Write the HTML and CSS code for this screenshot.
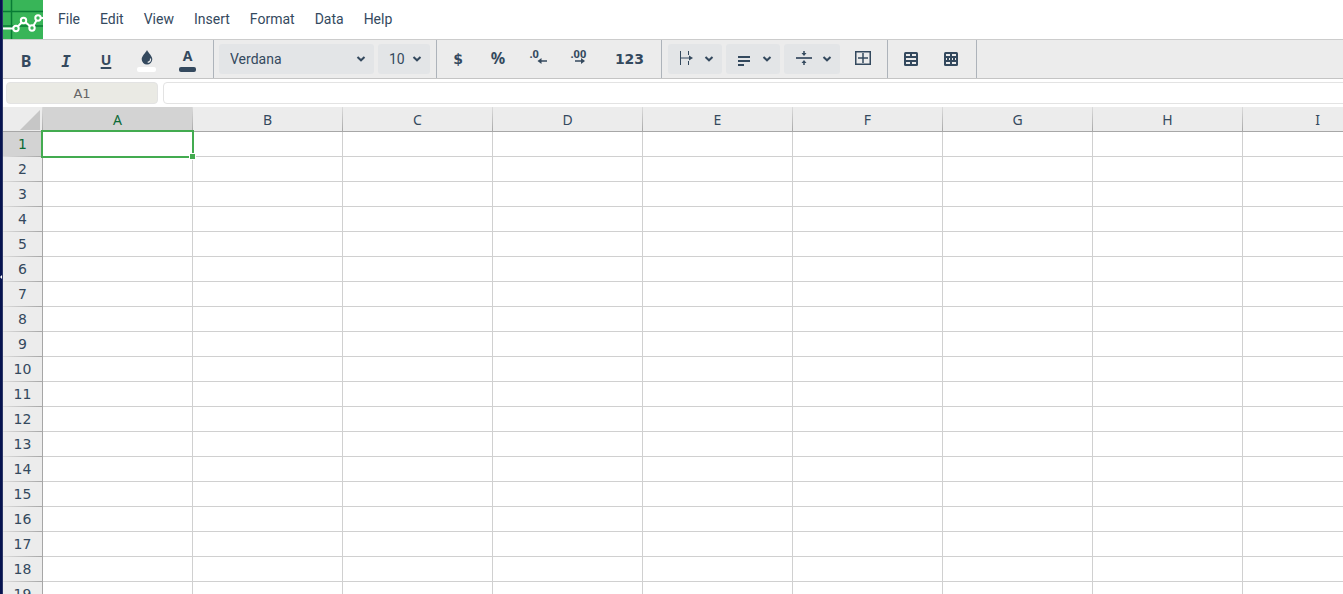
FILE: index.html
```html
<!DOCTYPE html>
<html lang="en">
<head>
  <meta charset="UTF-8">
  <title>Spreadsheet</title>
  <link rel="stylesheet" href="styles.css">
</head>
<body>

<div class="sidebar"><span class="sidebar-arrow"></span></div>

<div class="app">
  <header class="menubar">
    <svg class="logo" viewBox="0 0 40 39">
      <rect width="40" height="39" fill="#38b558"/>
      <path d="M8.5 0v39M0 11.5h40M0 26h40" stroke="#087b35" stroke-width="1.5"/>
      <path d="M0 28.5h13L20.500 20.500 29 28 35 18h5" fill="none" stroke="#fff" stroke-width="2"/>
      <g fill="#38b558" stroke="#fff" stroke-width="2">
        <circle cx="13" cy="28.500" r="2.700"/>
        <circle cx="20.500" cy="20.500" r="2.700"/>
        <circle cx="29" cy="28" r="2.700"/>
        <circle cx="35" cy="18" r="2.700"/>
      </g>
    </svg>
    <nav class="menu">
      <button>File</button>
      <button>Edit</button>
      <button>View</button>
      <button>Insert</button>
      <button>Format</button>
      <button>Data</button>
      <button>Help</button>
    </nav>
  </header>

  <div class="toolbar">
    <div class="group group-text">
      <button class="tool bold" aria-label="Bold">B</button>
      <button class="tool italic" aria-label="Italic">I</button>
      <button class="tool underline" aria-label="Underline">U</button>
      <button class="tool wide color-tool" aria-label="Fill color">
        <svg width="12" height="15" viewBox="0 0 12 15"><path d="M6 0C4.500 3 .7 6 .7 9.300a5.300 5.300 0 0 0 10.600 0C11.300 6 7.500 3 6 0z" fill="#34495e"/><path d="M9.500 8.500c.3 2-.9 3.500-2.800 3.900" fill="none" stroke="#ececec" stroke-width="1.200"/></svg>
        <span class="swatch swatch-fill"></span>
      </button>
      <button class="tool wide color-tool" aria-label="Text color">
        <span class="letter">A</span>
        <span class="swatch swatch-text"></span>
      </button>
    </div>

    <div class="group group-font">
      <div class="dropdown font-name">
        <select aria-label="Font"><option>Verdana</option><option>Arial</option></select>
        <svg class="chevron" viewBox="0 0 10 6"><path d="M1.500 1 5 4.300 8.500 1"/></svg>
      </div>
      <div class="dropdown font-size">
        <select aria-label="Font size"><option>10</option><option>12</option></select>
        <svg class="chevron" viewBox="0 0 10 6"><path d="M1.500 1 5 4.300 8.500 1"/></svg>
      </div>
    </div>

    <div class="group group-number">
      <button class="tool number" aria-label="Currency">$</button>
      <button class="tool percent" aria-label="Percent">%</button>
      <button class="tool wide decimal" aria-label="Decrease decimals">
        <span>.0</span>
        <svg width="18" height="6" viewBox="0 0 18 6"><path d="M9 3h8" stroke="#34495e" stroke-width="1.500"/><path d="M7.500 3l4-3v6z" fill="#34495e"/></svg>
      </button>
      <button class="tool wide decimal" aria-label="Increase decimals">
        <span>.00</span>
        <svg width="18" height="6" viewBox="0 0 18 6"><path d="M4 3h8" stroke="#34495e" stroke-width="1.500"/><path d="M14 3l-4-3v6z" fill="#34495e"/></svg>
      </button>
      <button class="tool number format">123</button>
    </div>

    <div class="group group-align">
      <button class="tool menu-tool" aria-label="Text wrap">
        <svg width="16" height="16" viewBox="0 0 16 16"><path d="M2.500 0v14M10.500 0v4M10.500 10v4M3 7h10" stroke="#34495e"/><path d="M11 4.500v5L15 7z" fill="#34495e"/></svg>
        <svg class="arrow" viewBox="0 0 10 6"><path d="M1.500 1 5 4.300 8.500 1"/></svg>
      </button>
      <button class="tool menu-tool" aria-label="Horizontal align">
        <svg width="16" height="16" viewBox="0 0 16 16"><path d="M2 6h12M2 10h12M2 14h6" stroke="#34495e" stroke-width="2"/></svg>
        <svg class="arrow" viewBox="0 0 10 6"><path d="M1.500 1 5 4.300 8.500 1"/></svg>
      </button>
      <button class="tool menu-tool valign" aria-label="Vertical align">
        <svg width="16" height="16" viewBox="0 0 16 16"><path d="M0 7h16" stroke="#34495e" stroke-width="1.700"/><path d="M8 0v3M8 11v3" stroke="#34495e" stroke-width="1.500"/><path d="M5.500 2h5L8 5zM5.500 12h5L8 9z" fill="#34495e"/></svg>
        <svg class="arrow" viewBox="0 0 10 6"><path d="M1.500 1 5 4.300 8.500 1"/></svg>
      </button>
      <button class="tool borders" aria-label="Borders">
        <svg width="16" height="16" viewBox="0 0 16 16"><path d="M.75 .75h14.500v12.500H.75z" fill="none" stroke="#34495e" stroke-width="1.500"/><path d="M8 2v10M3 7h10" stroke="#34495e" stroke-width="1.500"/></svg>
      </button>
    </div>

    <div class="group group-cells">
      <button class="tool" aria-label="Merge cells">
        <svg width="14" height="14" viewBox="0 0 14 14"><rect width="14" height="14" rx="1.500" fill="#34495e"/><path d="M2 2h4v2H2zM8 2h4v2H8zM2 6h10v2H2zM2 10h4v2H2zM8 10h4v2H8z" fill="#ececec"/></svg>
      </button>
      <button class="tool" aria-label="Unmerge cells">
        <svg width="14" height="14" viewBox="0 0 14 14"><rect width="14" height="14" rx="1.500" fill="#34495e"/><path d="M2 2h4v2H2zM8 2h4v2H8zM2 6h1v2H2zM5 6h1v2H5zM8 6h1v2H8zM11 6h1v2h-1zM2 10h4v2H2zM8 10h4v2H8z" fill="#ececec"/></svg>
      </button>
    </div>
  </div>

  <div class="formula-row">
    <input class="cell-name" type="text" value="A1" aria-label="Cell">
    <input class="formula" type="text" aria-label="Formula">
  </div>

  <table class="sheet">
    <thead>
      <tr id="columns"><th class="corner"><svg width="20" height="20" viewBox="0 0 20 20"><path d="M20 0v20H0z" fill="#c6c6c6"/></svg></th></tr>
    </thead>
    <tbody id="rows"></tbody>
  </table>
</div>

<script src="sheet.js"></script>
</body>
</html>
```

FILE: styles.css
```css
* { box-sizing: border-box; }

body {
  display: flex;
  height: 100vh;
  margin: 0;
  overflow: hidden;
  background: #fff;
  color: #34495e;
  font-family: Roboto, sans-serif;
  font-size: 14px;
}

button, select, input {
  margin: 0;
  padding: 0;
  border: 0;
  background: none;
  color: inherit;
  font: inherit;
}

svg { display: block; }

.sidebar {
  position: relative;
  flex: none;
  width: 3px;
  background: #06134f;
  border-right: 1px solid #2c3767;
}
.sidebar-arrow {
  position: absolute;
  top: 275px;
  left: 0;
  border: 2px solid transparent;
  border-right-color: #fff;
  border-left: 0;
}

.app { flex: 1; min-width: 0; overflow: hidden; }

/* menu */
.menubar { display: flex; height: 39px; }
.logo { width: 40px; height: 39px; }
.menu { display: flex; padding: 0 0 2px 5px; }
.menu button { padding: 0 10px; }

/* toolbar */
.toolbar {
  display: flex;
  height: 40px;
  background: #ececec;
  border-top: 1px solid #ccc;
  border-bottom: 1px solid #c4c4c4;
}
.group {
  display: flex;
  flex: none;
  align-items: center;
  border-right: 1px solid #adb3ba;
}
.group-text { padding: 0 5px 0 3px; }
.group-font { gap: 4px; padding: 0 6px 0 5px; }
.group-number { padding: 0 2px 0 1px; }
.group-align { gap: 4px; padding: 0 5px 0 6px; }
.group-cells { padding: 0 5px 0 3px; }

.tool {
  display: flex;
  align-items: center;
  justify-content: center;
  width: 40px;
  height: 30px;
}
.wide { width: 41px; }
.bold, .italic { padding-top: 4px; }
.bold { font: bold 16px "Noto Sans", sans-serif; }
.italic { font: italic bold 16px "DejaVu Sans Mono", monospace; }
.underline {
  font: bold 14px "Noto Sans", sans-serif;
  text-decoration: underline;
  text-decoration-thickness: 2px;
  text-underline-offset: 2px;
}
.color-tool { flex-direction: column; justify-content: flex-end; gap: 2px; padding-bottom: 2px; }
.letter { height: 16px; font: bold 14px/14px "Noto Sans", sans-serif; }
.swatch { height: 5px; border-radius: 2px; }
.swatch-fill { width: 19px; background: #fff; }
.swatch-text { width: 17px; background: #34495e; }

.dropdown { position: relative; height: 30px; }
.dropdown select {
  width: 100%;
  height: 100%;
  padding-left: 11px;
  border-radius: 3px;
  background: #e3e5e7;
  appearance: none;
}
.font-name { width: 155px; }
.font-size { width: 52px; }
.chevron, .arrow {
  width: 10px;
  height: 6px;
  fill: none;
  stroke: #34495e;
  stroke-width: 2;
}
.chevron { position: absolute; top: 12px; right: 8px; pointer-events: none; }

.number { font: bold 14px "DejaVu Sans", sans-serif; }
.percent { padding-bottom: 2px; font: bold 16px "Noto Sans", sans-serif; }
.format { width: 59px; }
.decimal { flex-direction: column; padding-bottom: 4px; }
.decimal span { width: 18px; height: 8px; font: bold 11px/8px "Noto Sans", sans-serif; text-align: left; }

.menu-tool { gap: 10px; width: 54px; padding-left: 2px; border-radius: 3px; background: #e3e5e7; }
.valign { width: 56px; padding-left: 4px; }
.borders { width: 38px; }

/* formula bar */
.formula-row { display: flex; gap: 5px; height: 28px; padding: 3px 0 3px 3px; }
.cell-name, .formula { border: 1px solid #e3e3e3; border-radius: 4px; }
.cell-name {
  width: 152px;
  background: #eaeae4;
  color: #666;
  font: 13px "DejaVu Sans", sans-serif;
  text-align: center;
}
.formula { flex: 1; margin-right: -8px; padding: 0 6px; }

/* sheet */
.sheet {
  table-layout: fixed;
  width: 1390px;
  border-collapse: separate;
  border-spacing: 0;
  font: 14px "DejaVu Sans", sans-serif;
}
.sheet th, .sheet td { height: 25px; padding: 0; }
.sheet th {
  background: #ececec;
  font-weight: normal;
  line-height: 23px;
}
.sheet td {
  position: relative;
  border-right: 1px solid #d0d0d0;
  border-bottom: 1px solid #d0d0d0;
}
.sheet thead th {
  width: 150px;
  font-family: "Noto Sans", sans-serif;
  border-right: 1px solid;
  border-bottom: 1px solid #a6a6a6;
  border-image: linear-gradient(#dedede, #a6a6a6) 1;
  border-image-width: 0 1px 1px 0;
}
.sheet thead .corner { width: 40px; }
.corner svg { margin: 2px 0 0 17px; }
.sheet tbody th {
  border-right: 1px solid #a6a6a6;
  border-bottom: 1px solid;
  border-image: linear-gradient(to right, #dedede, #a6a6a6) 1;
  border-image-width: 0 1px 1px 0;
}
.sheet th.active { background: #d3d3d3; color: #0c6b37; }

.selection {
  position: absolute;
  top: -2px;
  left: -2px;
  right: -2px;
  bottom: -2px;
  z-index: 1;
  border: 2px solid #43ab50;
}
.handle {
  position: absolute;
  right: -4px;
  bottom: -4px;
  width: 7px;
  height: 7px;
  border: 1px solid #fff;
  background: #43ab50;
}
```

FILE: sheet.js
```js
const columns = 'ABCDEFGHI'.split('');
const rowCount = 19;

const head = document.getElementById('columns');
columns.forEach((name, i) => {
  const th = document.createElement('th');
  th.textContent = name;
  if (i === 0) th.className = 'active';
  head.appendChild(th);
});

const body = document.getElementById('rows');
for (let r = 1; r <= rowCount; r++) {
  const tr = document.createElement('tr');
  tr.innerHTML = `<th class="${r === 1 ? 'active' : ''}">${r}</th>` + '<td></td>'.repeat(columns.length);
  body.appendChild(tr);
}

// A1 is selected on load
body.querySelector('td').innerHTML = '<div class="selection"><span class="handle"></span></div>';
```
